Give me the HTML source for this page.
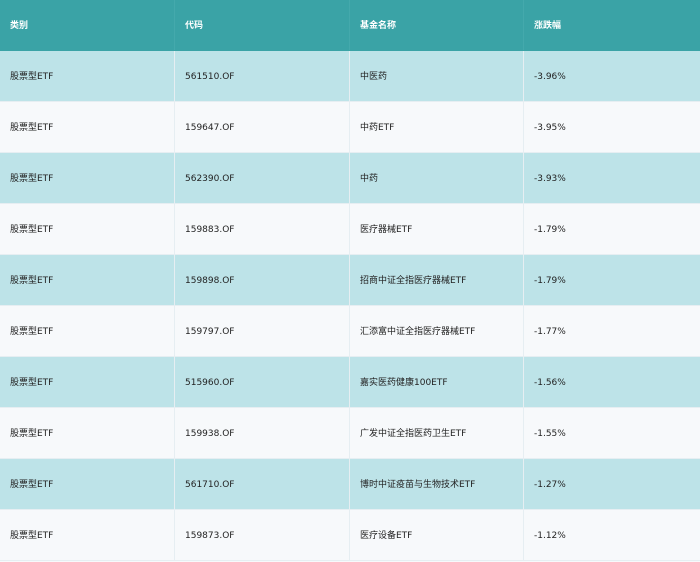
<!DOCTYPE html>
<html><head><meta charset="utf-8"><style>
body{margin:0;width:700px;height:560px;overflow:hidden;background:#f7f9fb;font-family:"DejaVu Sans","Noto Sans CJK SC",sans-serif;font-size:9px;color:#222}
.r{position:absolute;left:0;width:700px;height:50px;border-bottom:1px solid #e6eef2}
.c{position:absolute;top:0;height:50px;line-height:52px;padding-left:10px;border-right:1px solid #e6eef2;box-sizing:border-box;white-space:nowrap}
.h{background:#3aa3a6;color:#fff;font-weight:bold;border-bottom-color:#3aa3a6}
.h .c{border-right-color:#44a9ac;line-height:53px}
.a{background:#bde3e8}
.b{background:#f7f9fb}
.c1{left:0;width:175px}.c2{left:175px;width:175px}.c3{left:350px;width:174px}.c4{left:524px;width:176px;border-right:none}
</style></head><body>
<div class="r h" style="top:0"><div class="c c1">类别</div><div class="c c2">代码</div><div class="c c3">基金名称</div><div class="c c4">涨跌幅</div></div>
<div class="r a" style="top:51px"><div class="c c1">股票型ETF</div><div class="c c2">561510.OF</div><div class="c c3">中医药</div><div class="c c4">-3.96%</div></div>
<div class="r b" style="top:102px"><div class="c c1">股票型ETF</div><div class="c c2">159647.OF</div><div class="c c3">中药ETF</div><div class="c c4">-3.95%</div></div>
<div class="r a" style="top:153px"><div class="c c1">股票型ETF</div><div class="c c2">562390.OF</div><div class="c c3">中药</div><div class="c c4">-3.93%</div></div>
<div class="r b" style="top:204px"><div class="c c1">股票型ETF</div><div class="c c2">159883.OF</div><div class="c c3">医疗器械ETF</div><div class="c c4">-1.79%</div></div>
<div class="r a" style="top:255px"><div class="c c1">股票型ETF</div><div class="c c2">159898.OF</div><div class="c c3">招商中证全指医疗器械ETF</div><div class="c c4">-1.79%</div></div>
<div class="r b" style="top:306px"><div class="c c1">股票型ETF</div><div class="c c2">159797.OF</div><div class="c c3">汇添富中证全指医疗器械ETF</div><div class="c c4">-1.77%</div></div>
<div class="r a" style="top:357px"><div class="c c1">股票型ETF</div><div class="c c2">515960.OF</div><div class="c c3">嘉实医药健康100ETF</div><div class="c c4">-1.56%</div></div>
<div class="r b" style="top:408px"><div class="c c1">股票型ETF</div><div class="c c2">159938.OF</div><div class="c c3">广发中证全指医药卫生ETF</div><div class="c c4">-1.55%</div></div>
<div class="r a" style="top:459px"><div class="c c1">股票型ETF</div><div class="c c2">561710.OF</div><div class="c c3">博时中证疫苗与生物技术ETF</div><div class="c c4">-1.27%</div></div>
<div class="r b" style="top:510px"><div class="c c1">股票型ETF</div><div class="c c2">159873.OF</div><div class="c c3">医疗设备ETF</div><div class="c c4">-1.12%</div></div>
</body></html>
